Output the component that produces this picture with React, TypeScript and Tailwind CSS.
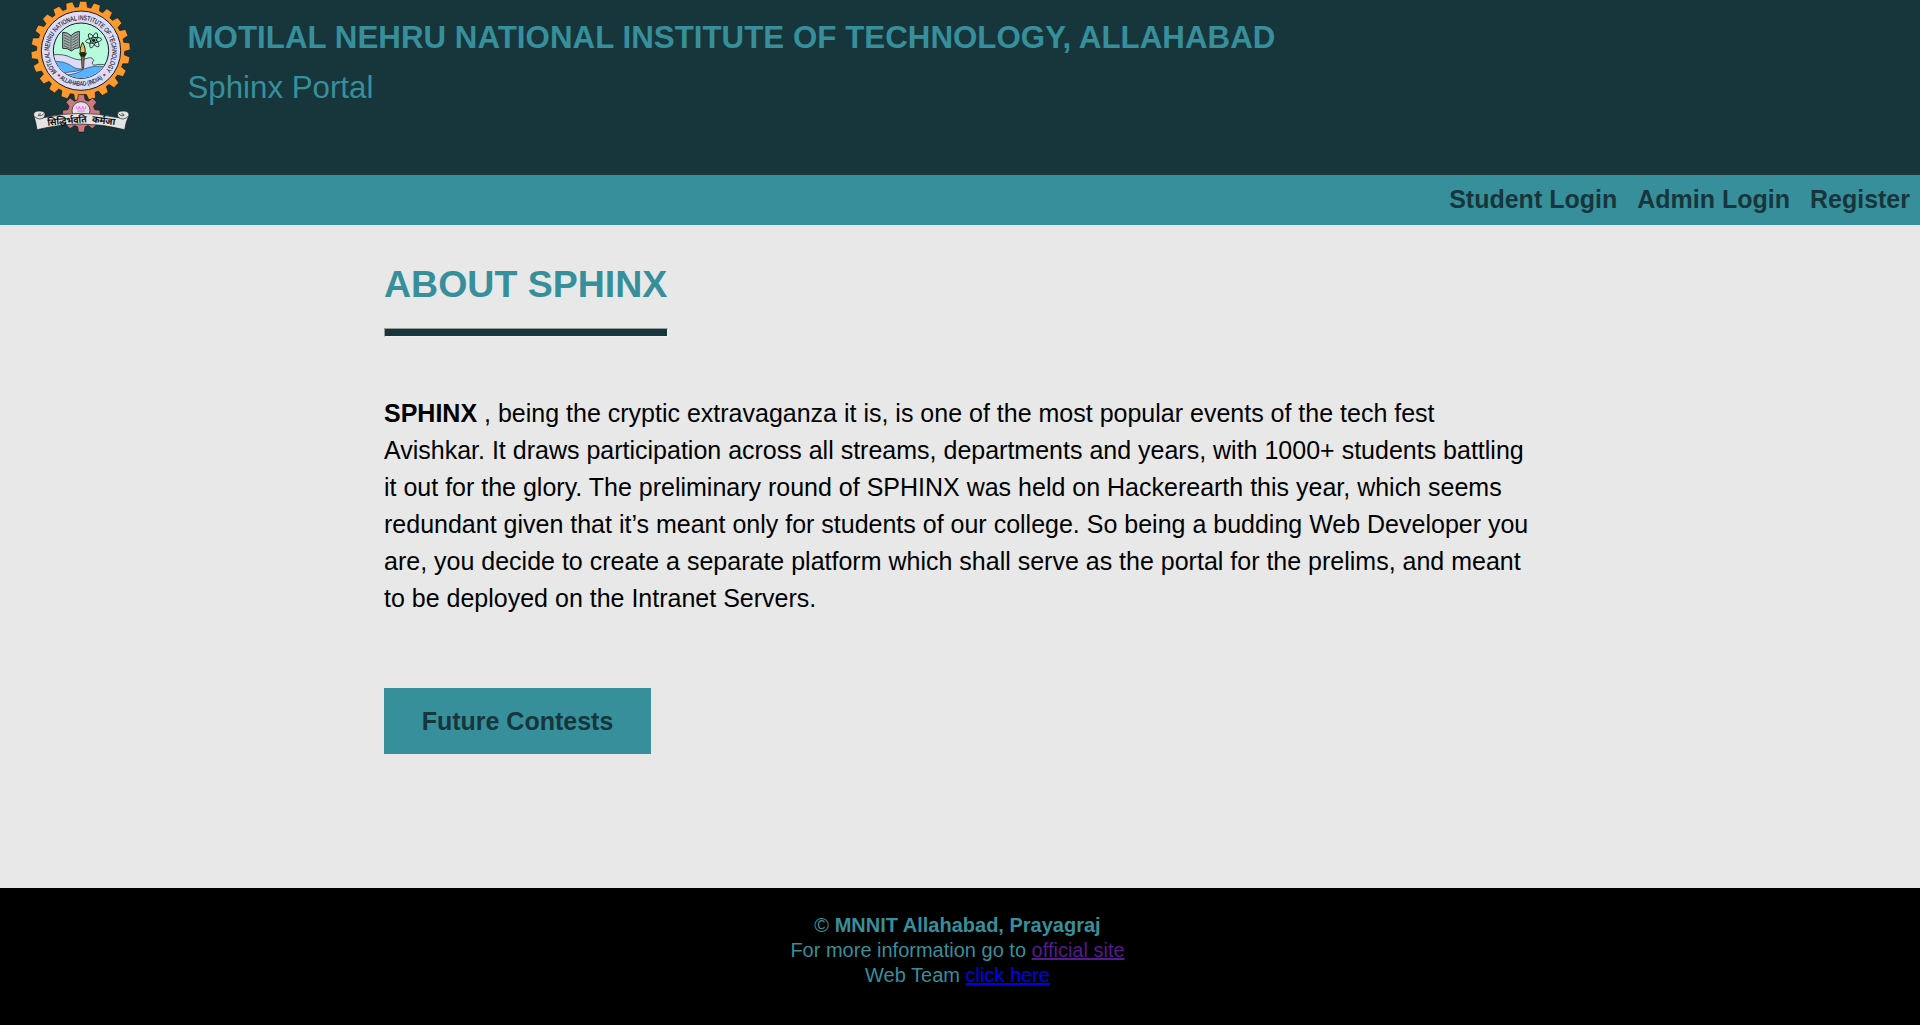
import React from 'react';

function gearPath(cx: number, cy: number, outer: number, root: number, teeth: number, offset: number, rootShare: number, tipShare: number) {
  const step = 360 / teeth;
  const pt = (r: number, deg: number) => {
    const a = ((deg - 90) * Math.PI) / 180;
    return `${(cx + r * Math.cos(a)).toFixed(1)} ${(cy + r * Math.sin(a)).toFixed(1)}`;
  };
  const parts: string[] = [];
  for (let i = 0; i < teeth; i++) {
    const c = offset + i * step;
    parts.push(pt(root, c - step * rootShare), pt(outer, c - step * tipShare), pt(outer, c + step * tipShare), pt(root, c + step * rootShare));
  }
  return `M${parts.join('L')}Z`;
}

const BIG_GEAR = gearPath(182, 152.5, 149, 132, 22, 3, 0.36, 0.24);
const SMALL_GEAR = gearPath(184, 340, 57, 42, 8, 0, 0.34, 0.2);

function Crest() {
  return (
    <svg className="block h-[140px] w-[120px] shrink-0" viewBox="0 0 360 420" role="img" aria-label="MNNIT crest">
      <defs>
        <path id="ring-top" d="M110 216A94.500 94.500 0 1 1 257 212" />
        <path id="ring-bottom" d="M98 216A108 108 0 0 0 268 216" />
        <clipPath id="disc"><circle cx="183" cy="152" r="82" /></clipPath>
      </defs>

      <path d={BIG_GEAR} fill="#fb9a2e" stroke="#15181c" strokeWidth="2" strokeLinejoin="round" />
      <path d={SMALL_GEAR} fill="#c97b7d" stroke="#1c1414" strokeWidth="2" />
      <circle cx="183" cy="152" r="119" fill="#dcdcf8" stroke="#1a1a22" strokeWidth="3" />
      <circle cx="183" cy="152" r="83" fill="#b5fbdc" stroke="#15181c" strokeWidth="3" />

      <g clipPath="url(#disc)">
        <path d="M96 165Q130 160 154 173Q178 184 198 176Q216 168 221 181Q212 190 221 196Q240 190 270 197V240H96Z" fill="#dcdcf8" stroke="#15181c" strokeWidth="2" />
        <path d="M98 184Q132 183 152 196Q168 210 192 206Q176 214 150 216Q124 222 112 212Z" fill="#58b1fb" stroke="#15181c" strokeWidth="1.500" />
        <path d="M138 224Q170 224 190 208Q218 194 262 201Q246 228 204 234Q164 240 138 224Z" fill="#58b1fb" stroke="#15181c" strokeWidth="1.500" />
      </g>

      <g stroke="#2a2f33" strokeLinejoin="round">
        <path d="M128 97Q142 96 153 107Q164 95 178 94V143Q164 143 154 153Q142 143 128 145Z" fill="#a0aeaa" strokeWidth="3" />
        <path d="M153 107V152M132 105L149 113M132 113L149 121M132 121L149 129M132 129L149 137M132 137L149 145M174 102L157 112M174 110L157 120M174 118L157 128M174 126L157 136M174 134L157 144" fill="none" strokeWidth="2" />
      </g>

      <g fill="none" stroke="#151c1e" strokeWidth="2.500">
        <ellipse cx="221" cy="121" rx="8" ry="24" transform="rotate(22 221 121)" />
        <ellipse cx="221" cy="121" rx="8" ry="24" transform="rotate(82 221 121)" />
        <ellipse cx="221" cy="121" rx="8" ry="24" transform="rotate(142 221 121)" />
        <circle cx="221" cy="121" r="4" fill="#151c1e" />
      </g>

      <path d="M188 127Q178 146 181 158H195Q198 146 188 127Z" fill="#e9c04a" stroke="#15181c" strokeWidth="3" />
      <path d="M176 158H201L195 170H182Z" fill="#2b2417" />
      <path d="M184 170H193L191 204H186Z" fill="#8d7650" stroke="#15181c" strokeWidth="2" />

      <g fill="#23242c" stroke="#23242c" strokeWidth="0.500" fontFamily='"Liberation Sans", Arial, sans-serif'>
        <text fontSize="20">
          <textPath href="#ring-top" textLength="424" lengthAdjust="spacingAndGlyphs">MOTILAL NEHRU NATIONAL INSTITUTE OF TECHNOLOGY</textPath>
        </text>
        <text fontSize="19" textAnchor="middle">
          <textPath href="#ring-bottom" startOffset="50%" textLength="138" lengthAdjust="spacingAndGlyphs">ALLAHABAD (INDIA)</textPath>
        </text>
      </g>
      <circle cx="117" cy="226" r="3.500" fill="#f01c2c" />
      <circle cx="253" cy="225" r="3.500" fill="#f01c2c" />

      <circle cx="183" cy="332" r="27" fill="#e6dfea" stroke="#1c1414" strokeWidth="2" />
      <path d="M169 319V325Q173 330 177 325V319M179 319V325Q183 330 187 325V319M189 319V325Q193 330 197 325V319M173 333H194" fill="none" stroke="#e45be0" strokeWidth="2.500" />

      <g fill="#e4e4e4" stroke="#15181c" strokeWidth="2" strokeLinejoin="round">
        <path d="M41 346Q48 366 51 389Q122 372 184 372Q250 372 314 389Q317 366 327 346Q312 356 286 352Q184 328 78 352Q56 356 41 346Z" />
        <path d="M41 346Q39 332 60 333Q76 334 75 343Q76 356 58 357Q46 355 41 346Z" />
        <path d="M327 346Q327 332 308 333Q291 334 292 343Q292 356 310 357Q322 355 327 346Z" />
        <path d="M72 341Q64 350 55 347Q54 341 63 341M295 341Q303 350 312 347Q313 341 304 341" fill="none" />
      </g>
      <g fill="#0c0c0c" fontSize="29" fontWeight="700" fontFamily='"Noto Sans Devanagari", "Noto Sans", sans-serif'>
        <text x="83" y="377" textLength="118" lengthAdjust="spacingAndGlyphs" transform="rotate(-5 83 377)">सिद्धिर्भवति</text>
        <text x="215" y="367" textLength="70" lengthAdjust="spacingAndGlyphs" transform="rotate(7 215 367)">कर्मजा</text>
      </g>
    </svg>
  );
}

const LINES = [
  ' , being the cryptic extravaganza it is, is one of the most popular events of the tech fest',
  'Avishkar. It draws participation across all streams, departments and years, with 1000+ students battling',
  'it out for the glory. The preliminary round of SPHINX was held on Hackerearth this year, which seems',
  'redundant given that it’s meant only for students of our college. So being a budding Web Developer you',
  'are, you decide to create a separate platform which shall serve as the portal for the prelims, and meant',
  'to be deployed on the Intranet Servers.',
];

export default function App() {
  return (
    <div className="flex h-[1025px] flex-col overflow-hidden bg-[#e8e8e8] font-['Liberation_Sans',Arial,sans-serif]">
      <header className="flex h-[175px] shrink-0 bg-[#17363c] pl-5 text-[31.25px] leading-[50px] text-[#378f9b]">
        <Crest />
        <div className="ml-[47.5px] pt-[12.5px]">
          <h1 className="font-bold tracking-[0.04px] whitespace-nowrap">MOTILAL NEHRU NATIONAL INSTITUTE OF TECHNOLOGY, ALLAHABAD</h1>
          <p>Sphinx Portal</p>
        </div>
      </header>

      <nav className="flex h-[50px] shrink-0 justify-end gap-5 bg-[#378f9b] pr-2.5 text-[25px] leading-[49px] font-bold text-[#17363c]">
        <a href="#student">Student Login</a>
        <a href="#admin">Admin Login</a>
        <a href="#register">Register</a>
      </nav>

      <main className="flex grow flex-col items-start pt-[34px] pl-96">
        <div className="w-[284px]">
          <h2 className="text-[37.5px] leading-[50px] font-bold whitespace-nowrap text-[#378f9b]">ABOUT SPHINX</h2>
          <div className="mt-[19px] h-[9px] border border-t-[#9a9a9a] border-r-[#eeeeee] border-b-[#eeeeee] border-l-[#9a9a9a] bg-[#17363c]" />
        </div>
        <p className="mt-[58px] text-[25px] leading-[37px] whitespace-nowrap text-black">
          <b>SPHINX</b>
          {LINES.map((line) => (
            <React.Fragment key={line}>
              {line}
              <br />
            </React.Fragment>
          ))}
        </p>
        <button className="mt-[71px] h-[66px] w-[267px] bg-[#378f9b] text-[25px] leading-[66px] font-bold text-[#17363c]">Future Contests</button>
      </main>

      <footer className="h-[137px] shrink-0 bg-black pt-[25px] pr-[5px] text-center text-xl leading-[25px] text-[#378f9b]">
        <p>© <b>MNNIT Allahabad, Prayagraj</b></p>
        <p>For more information go to <a href="#site" className="text-[#551a8b] underline">official site</a></p>
        <p>Web Team <a href="#team" className="text-[#0000ee] underline">click here</a></p>
      </footer>
    </div>
  );
}
